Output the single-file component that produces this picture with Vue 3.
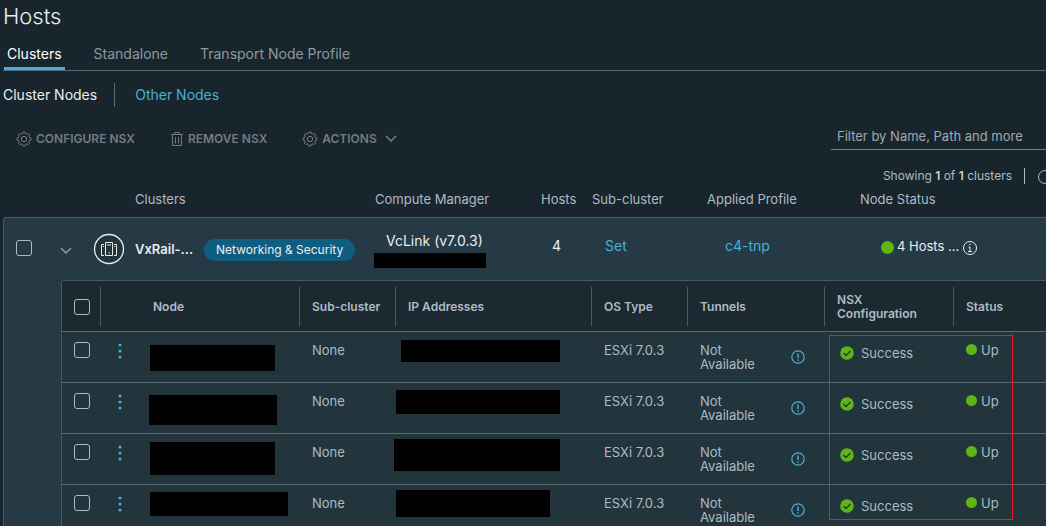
<script setup>
import { ref } from 'vue'

const filter = ref('')
const nodes = [
  { id: 1, name: [125, 26, 11, 13], ip: [159, 22, 5, 8] },
  { id: 2, name: [128, 30, 10, 12], ip: [164, 24, 0, 7] },
  { id: 3, name: [125, 33, 11, 8], ip: [166, 32, -2, 5] },
  { id: 4, name: [138, 24, 11, 7], ip: [154, 27, 0, 5] },
]
const box = ([w, h, x, y]) => ({
  width: w + 'px',
  height: h + 'px',
  marginLeft: x + 'px',
  marginTop: y + 'px',
})

// Eight-toothed cog outline centred on 8,8
const cog = Array.from({ length: 8 }, (_, i) => {
  const at = (r, deg) => {
    const a = ((i * 45 + deg) * Math.PI) / 180
    return `${(8 + r * Math.sin(a)).toFixed(2)} ${(8 - r * Math.cos(a)).toFixed(2)}`
  }
  return `${i ? 'L' : 'M'}${at(5.6, -14)}L${at(7, -9)}L${at(7, 9)}L${at(5.6, 14)}`
}).join('') + 'Z'
</script>

<template>
  <main class="page">
    <h1>Hosts</h1>

    <nav class="tabs" aria-label="Hosts">
      <button class="tab active" type="button">Clusters</button>
      <button class="tab" type="button">Standalone</button>
      <button class="tab" type="button">Transport Node Profile</button>
    </nav>

    <nav class="subnav" aria-label="Nodes">
      <a class="current" href="#cluster-nodes">Cluster Nodes</a>
      <a href="#other-nodes">Other Nodes</a>
    </nav>

    <div class="toolbar">
      <button class="action" type="button">
        <svg width="16" height="16" viewBox="0 0 16 16" fill="none" stroke="currentColor">
          <circle cx="8" cy="8" r="2.7" />
          <path :d="cog" stroke-linejoin="round" />
        </svg>
        <span>CONFIGURE NSX</span>
      </button>
      <button class="action" type="button">
        <svg width="14" height="16" viewBox="0 0 14 16" fill="none" stroke="currentColor">
          <path d="M1 3.5h12M4.5 3V1.500h5V3M2.500 4v10.500h9V4M5.500 6v6.500M8.500 6v6.500" />
        </svg>
        <span>REMOVE NSX</span>
      </button>
      <button class="action" type="button">
        <svg width="16" height="16" viewBox="0 0 16 16" fill="none" stroke="currentColor">
          <circle cx="8" cy="8" r="2.7" />
          <path :d="cog" stroke-linejoin="round" />
        </svg>
        <span>ACTIONS</span>
        <svg class="caret" width="12" height="8" viewBox="0 0 12 8" fill="none" stroke="currentColor" stroke-width="1.6">
          <path d="M1 1l5 5 5-5" />
        </svg>
      </button>
      <input v-model="filter" class="filter" type="text" aria-label="Filter" placeholder="Filter by Name, Path and more" />
    </div>

    <div class="summary">
      <span>Showing <b>1</b> of <b>1</b> clusters</span>
      <button type="button" class="refresh" aria-label="Refresh">
        <svg width="16" height="16" viewBox="0 0 16 16" fill="none" stroke="currentColor"><circle cx="8" cy="9" r="6.500" /></svg>
      </button>
    </div>

    <div class="cluster-grid heads">
      <span class="c-name">Clusters</span>
      <span>Compute Manager</span>
      <span>Hosts</span>
      <span>Sub-cluster</span>
      <span>Applied Profile</span>
      <span>Node Status</span>
    </div>

    <section class="cluster">
      <div class="cluster-grid row">
        <input class="check" type="checkbox" aria-label="Select cluster" />
        <button class="expand" type="button" aria-label="Collapse cluster">
          <svg width="12" height="8" viewBox="0 0 12 8" fill="none" stroke="currentColor" stroke-width="1.5">
            <path d="M1 1l5 5 5-5" />
          </svg>
        </button>
        <svg class="host-icon" width="32" height="32" viewBox="0 0 32 32" fill="none" stroke="currentColor">
          <circle cx="16" cy="16" r="14.500" fill="#22333b" stroke-width="1.300" />
          <path d="M12.500 9.500h7v13h-7zM11 11.500H8.500v11H11M21 11.500h2.500v11H21" />
          <path d="M14 12h4M15.500 20h1.500M10 13.500h1M21 13.500h1" />
        </svg>
        <strong class="vx">VxRail-...</strong>
        <span class="tag-cell"><span class="tag">Networking &amp; Security</span></span>
        <div class="manager">
          <span>VcLink (v7.0.3)</span>
          <span class="mask"></span>
        </div>
        <span class="count">4</span>
        <a class="set" href="#set">Set</a>
        <a class="profile" href="#c4-tnp">c4-tnp</a>
        <span class="host-status">
          <i class="dot"></i>
          <span>4 Hosts ...</span>
          <svg class="info" width="16" height="16" viewBox="0 0 16 16" fill="none" stroke="currentColor">
            <circle cx="8" cy="8" r="6.500" />
            <path d="M6.500 7h1.500v4M6 11.500h4M7.200 4.500h1.600" />
          </svg>
        </span>
      </div>

      <div class="nodes">
        <table>
          <colgroup>
            <col class="w-check" /><col class="w-menu" /><col class="w-node" /><col class="w-sub" /><col class="w-ip" />
            <col class="w-os" /><col class="w-tun" /><col class="w-nsx" /><col />
          </colgroup>
          <thead>
            <tr>
              <th><div><input class="check" type="checkbox" aria-label="Select all nodes" /></div></th>
              <th colspan="2"><div class="node-head">Node</div></th>
              <th><div>Sub-cluster</div></th>
              <th><div>IP Addresses</div></th>
              <th><div>OS Type</div></th>
              <th><div>Tunnels</div></th>
              <th><div>NSX<br />Configuration</div></th>
              <th><div class="last">Status</div></th>
            </tr>
          </thead>
          <tbody>
            <tr v-for="n in nodes" :key="n.id">
              <td class="pick"><input class="check" type="checkbox" :aria-label="`Select node ${n.id}`" /></td>
              <td class="menu">
                <button type="button" :aria-label="`Node ${n.id} menu`">
                  <svg width="4" height="16" viewBox="0 0 4 16" fill="currentColor">
                    <circle cx="2" cy="2" r="1.500" /><circle cx="2" cy="8" r="1.500" /><circle cx="2" cy="14" r="1.500" />
                  </svg>
                </button>
              </td>
              <td class="masked"><div class="mask" :style="box(n.name)"></div></td>
              <td>None</td>
              <td class="masked"><div class="mask" :style="box(n.ip)"></div></td>
              <td>ESXi 7.0.3</td>
              <td>
                <div class="tunnel">
                  <span>Not<br />Available</span>
                  <svg width="14" height="14" viewBox="0 0 14 14" fill="none" stroke="currentColor">
                    <circle cx="7" cy="7" r="6.200" stroke-width="1.200" />
                    <path d="M7 3.500v4.500M7 9.300v1.400" stroke-width="1.400" />
                  </svg>
                </div>
              </td>
              <td>
                <div class="success">
                  <svg width="14" height="14" viewBox="0 0 14 14" fill="none">
                    <circle cx="7" cy="7" r="6.800" fill="#60b515" />
                    <path d="M3.500 7l2.500 2.500 4.500-4.500" stroke="#22343c" stroke-width="1.400" />
                  </svg>
                  <span>Success</span>
                </div>
              </td>
              <td><div class="up"><i class="dot small"></i>Up</div></td>
            </tr>
          </tbody>
        </table>
        <div class="highlight"></div>
      </div>
    </section>
  </main>
</template>

<style>
html,
body {
  height: 100%;
  overflow: hidden;
  background: #19252c;
}
</style>

<style scoped>
* {
  box-sizing: border-box;
}
.page {
  padding-left: 3px;
  overflow: hidden;
  color: #adbbc4;
  font: 13px/14px Inter, "Open Sans", sans-serif;
}
button {
  padding: 0;
  border: 0;
  background: none;
  color: inherit;
  font: inherit;
}
a {
  color: #49afd9;
  text-decoration: none;
}
svg {
  display: block;
  flex: none;
}
h1 {
  margin: 0;
  padding-top: 4px;
  color: #eaedf0;
  font-size: 22px;
  font-weight: 300;
  line-height: 24px;
}
.tabs {
  display: flex;
  gap: 26px;
  height: 43px;
  padding-left: 1px;
  border-bottom: 1px solid #566b78;
}
.tab {
  padding: 12px 3px 0;
  border-bottom: 3px solid transparent;
  color: #8c99a1;
  font-size: 14px;
}
.tab.active {
  border-color: #49afd9;
  color: #fff;
}
.subnav {
  display: flex;
  padding-top: 12px;
  font-size: 14px;
  line-height: 24px;
}
.subnav a + a {
  padding-left: 20px;
}
.subnav .current {
  padding-right: 17px;
  border-right: 1px solid #566b78;
  color: #eaedf0;
}
.toolbar {
  display: flex;
  align-items: center;
  margin-top: 17px;
  padding-left: 13px;
  height: 26px;
}
.action {
  display: flex;
  align-items: center;
  gap: 4px;
  margin: 4px 35px 0 0;
  color: #727b81;
  font-size: 12px;
  font-weight: 600;
}
.caret {
  margin-left: 4px;
}
.filter {
  width: 215px;
  height: 26px;
  margin-left: auto;
  padding: 0 6px 1px;
  border: 0;
  border-bottom: 1px solid #6b7c87;
  background: none;
  color: #eaedf0;
  font: inherit;
  outline: none;
}
.filter::placeholder {
  color: #a0a9ae;
  opacity: 1;
}
.summary {
  display: flex;
  justify-content: flex-end;
  align-items: center;
  height: 16px;
  margin: 18px -7px 0 0;
  font-size: 12px;
}
.summary b {
  font-weight: 600;
  color: #c8d2d8;
}
.refresh {
  margin-left: 12px;
  padding-left: 12px;
  border-left: 1px solid #adbbc4;
}
.cluster-grid {
  display: grid;
  grid-template-columns: 48px 40px 43px 69px 172px 166px 51px 115px 153px 1fr;
}
.heads {
  padding-top: 8px;
  height: 33px;
}
.c-name {
  grid-column: 4 / 6;
  padding-left: 1px;
}
.cluster {
  border: solid #465a66;
  border-width: 1px 0 0 1px;
  border-top-left-radius: 3px;
  background: #263a45;
}
.row {
  height: 62px;
  color: #eaedf0;
  font-size: 14px;
}
.check {
  appearance: none;
  width: 16px;
  height: 16px;
  margin: 0;
  border: 1px solid #adbbc4;
  border-radius: 3px;
}
.row .check {
  margin: 22px 0 0 12px;
}
.expand {
  margin: 29px 0 0 8px;
  align-self: start;
  color: #8e9ba3;
}
.host-icon {
  margin: 15px 0 0 1px;
}
.vx {
  padding-top: 24px;
  font-size: 13px;
  font-weight: 600;
}
.tag-cell {
  padding-top: 21px;
}
.tag {
  display: inline-block;
  padding: 0 12px;
  border-radius: 11px;
  background: #0f5e82;
  font-size: 12px;
  line-height: 22px;
}
.manager {
  display: flex;
  flex-direction: column;
  padding-top: 16px;
}
.manager span:first-child {
  padding-left: 10px;
}
.mask {
  display: block;
  background: #000;
}
.manager .mask {
  width: 112px;
  height: 15px;
  margin: 5px 0 0 -2px;
}
.count,
.set,
.profile {
  padding: 21px 0 0 10px;
}
.profile {
  padding-left: 17px;
}
.set {
  padding-left: 12px;
}
.host-status {
  display: flex;
  align-items: center;
  height: 16px;
  gap: 3px;
  margin: 20px 0 0 20px;
  font-size: 13px;
}
.info {
  margin-top: 4px;
}
.dot {
  width: 13px;
  height: 13px;
  border-radius: 50%;
  background: #60b515;
}
.host-status .dot {
  margin-top: 2px;
}
.dot.small {
  width: 11px;
  height: 11px;
}
.nodes {
  position: relative;
  margin-left: 57px;
  border: solid #465a66;
  border-width: 1px 0 0 1px;
  border-top-left-radius: 3px;
  background: #22343c;
}
table {
  width: 100%;
  table-layout: fixed;
  border-collapse: collapse;
}
.w-check { width: 39px; }
.w-menu { width: 38px; }
.w-node { width: 161px; }
.w-sub { width: 96px; }
.w-ip { width: 196px; }
.w-os { width: 96px; }
.w-tun { width: 137px; }
.w-nsx { width: 129px; }
thead {
  background: #1c2931;
}
th {
  height: 50px;
  padding: 2px 0 0;
  font-size: 12px;
  font-weight: 600;
  text-align: left;
}
th div {
  display: flex;
  align-items: center;
  height: 39px;
  padding-left: 12px;
  border-right: 1px solid #465a66;
}
th .node-head {
  padding-left: 52px;
}
th .last {
  border: 0;
}
td {
  height: 51px;
  padding: 11px 0 0 12px;
  border-top: 1px solid #566b78;
  vertical-align: top;
}
.pick {
  padding-top: 10px;
}
.menu {
  padding-left: 17px;
  color: #49afd9;
}
.masked {
  padding: 0;
}
.tunnel {
  display: flex;
  align-items: center;
  justify-content: space-between;
  padding-right: 20px;
}
.tunnel svg {
  color: #49afd9;
}
.success {
  display: flex;
  align-items: center;
  gap: 7px;
  padding: 3px 0 0 3px;
}
.up {
  display: flex;
  align-items: center;
  gap: 4px;
}
.highlight {
  position: absolute;
  top: 54px;
  left: 767px;
  width: 184px;
  height: 185px;
  border: 1px solid #ed1c24;
  pointer-events: none;
}
</style>
